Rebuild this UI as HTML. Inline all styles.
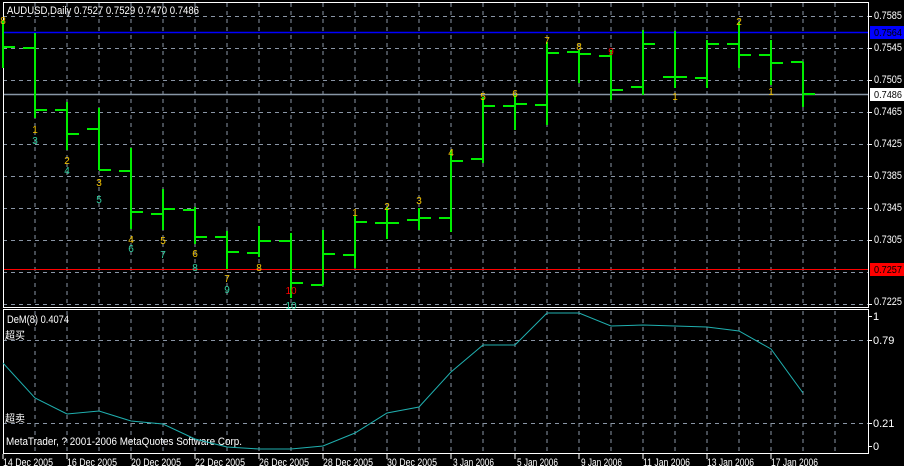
<!DOCTYPE html>
<html><head><meta charset="utf-8"><style>
html,body{margin:0;padding:0;background:#000;width:904px;height:466px;overflow:hidden}
svg{display:block}
text{font-family:"Liberation Sans","Noto Sans CJK SC",sans-serif;font-size:11px}
</style></head><body>
<svg width="904" height="466" viewBox="0 0 904 466" xmlns="http://www.w3.org/2000/svg">
<rect width="904" height="466" fill="#000"/>
<g stroke="#8a96a6" stroke-width="1" stroke-dasharray="4,4">
<path d="M35 3V307M67 3V307M99 3V307M131 3V307M163 3V307M195 3V307M227 3V307M259 3V307M291 3V307M323 3V307M355 3V307M387 3V307M419 3V307M451 3V307M483 3V307M515 3V307M547 3V307M579 3V307M611 3V307M643 3V307M675 3V307M707 3V307M739 3V307M771 3V307M803 3V307M835 3V307"/>
<path d="M35 311V453M67 311V453M99 311V453M131 311V453M163 311V453M195 311V453M227 311V453M259 311V453M291 311V453M323 311V453M355 311V453M387 311V453M419 311V453M451 311V453M483 311V453M515 311V453M547 311V453M579 311V453M611 311V453M643 311V453M675 311V453M707 311V453M739 311V453M771 311V453M803 311V453M835 311V453"/>
<path d="M3 16.5H868M3 48.5H868M3 80.5H868M3 112.5H868M3 144.5H868M3 176.5H868M3 208.5H868M3 240.5H868M3 272.5H868M3 304.5H868"/>
<path d="M3 340.5H868M3 423.5H868"/>
</g>
<path d="M3 32.5H868" stroke="#0000ff" stroke-width="1.5"/>
<path d="M3 94.5H868" stroke="#8896a6" stroke-width="1.5"/>
<path d="M3 269.5H868" stroke="#ff0000" stroke-width="1"/>
<path d="M3.5 2.5H868.5V307.5H3.5Z" fill="none" stroke="#fff" stroke-width="1"/>
<path d="M3.5 309.5H868.5V453.5H3.5Z" fill="none" stroke="#fff" stroke-width="1"/>
<g stroke="#00ee00" stroke-width="2" fill="none">
<path d="M3 20V68M3 47H15"/>
<path d="M35 33V118M23 48H35M35 110H47"/>
<path d="M67 102V150M55 110H67M67 134H79"/>
<path d="M99 108V170M87 129H99M99 170H111"/>
<path d="M131 148V229M119 171H131M131 212H143"/>
<path d="M163 189V230M151 214H163M163 209H175"/>
<path d="M195 207V244M183 210H195M195 237H207"/>
<path d="M227 231V269M215 237H227M227 252H239"/>
<path d="M259 226V257M247 253H259M259 241H271"/>
<path d="M291 233V298M279 241H291M291 283H303"/>
<path d="M323 230V285M311 285H323M323 254H335"/>
<path d="M355 216V268M343 255H355M355 222H367"/>
<path d="M387 207V239M375 223H399"/>
<path d="M419 208V230M407 220H419M419 218H431"/>
<path d="M451 150V232M439 218H451M451 161H463"/>
<path d="M483 97V163M471 159H483M483 106H495"/>
<path d="M515 95V130M503 106H515M515 104H527"/>
<path d="M547 42V125M535 105H547M547 53H559"/>
<path d="M579 50V83M567 52H579M579 54H591"/>
<path d="M611 50V100M599 56H611M611 90H623"/>
<path d="M643 30V95M631 87H643M643 44H655"/>
<path d="M675 31V88M663 77H675M675 77H687"/>
<path d="M707 40V88M695 78H707M707 44H719"/>
<path d="M739 22V68M727 44H739M739 55H751"/>
<path d="M771 40V85M759 55H771M771 63H783"/>
<path d="M803 62V107M791 62H803M803 94H815"/>
</g>
<g fill="#f5c400" text-anchor="middle">
<text x="3" y="24" style="font-size:10px">8</text>
<text x="35" y="133" style="font-size:10px">1</text>
<text x="67" y="164" style="font-size:10px">2</text>
<text x="99" y="186" style="font-size:10px">3</text>
<text x="131" y="243" style="font-size:10px">4</text>
<text x="163" y="244" style="font-size:10px">5</text>
<text x="195" y="257" style="font-size:10px">6</text>
<text x="227" y="282" style="font-size:10px">7</text>
<text x="259" y="271" style="font-size:10px">8</text>
<text x="355" y="216" style="font-size:10px">1</text>
<text x="387" y="210" style="font-size:10px">2</text>
<text x="419" y="204" style="font-size:10px">3</text>
<text x="451" y="156" style="font-size:10px">4</text>
<text x="483" y="100" style="font-size:10px">5</text>
<text x="515" y="97" style="font-size:10px">6</text>
<text x="547" y="44" style="font-size:10px">7</text>
<text x="579" y="50" style="font-size:10px">8</text>
<text x="675" y="100" style="font-size:10px">1</text>
<text x="739" y="25" style="font-size:10px">2</text>
<text x="771" y="95" style="font-size:10px">1</text>
</g>
<g fill="#30d0a0" text-anchor="middle">
<text x="35" y="144" style="font-size:10px">3</text>
<text x="67" y="174" style="font-size:10px">4</text>
<text x="99" y="203" style="font-size:10px">5</text>
<text x="131" y="252" style="font-size:10px">6</text>
<text x="163" y="258" style="font-size:10px">7</text>
<text x="195" y="271" style="font-size:10px">8</text>
<text x="227" y="293" style="font-size:10px">9</text>
<text x="291" y="309" style="font-size:10px">10</text>
</g>
<g fill="#ff0000" text-anchor="middle">
<text x="291" y="294" style="font-size:10px">10</text>
<text x="611" y="55" style="font-size:10px">9</text>
</g>
<text x="7" y="14" fill="#fff" textLength="192" lengthAdjust="spacingAndGlyphs">AUDUSD,Daily  0.7527 0.7529 0.7470 0.7486</text>
<g fill="#fff" style="font-size:10.5px">
<path d="M868 16.5h4M868 48.5h4M868 80.5h4M868 112.5h4M868 144.5h4M868 176.5h4M868 208.5h4M868 240.5h4M868 304.5h4" stroke="#fff"/>
<text x="874" y="19" textLength="28" lengthAdjust="spacingAndGlyphs">0.7585</text>
<text x="874" y="51" textLength="28" lengthAdjust="spacingAndGlyphs">0.7545</text>
<text x="874" y="83" textLength="28" lengthAdjust="spacingAndGlyphs">0.7505</text>
<text x="874" y="115" textLength="28" lengthAdjust="spacingAndGlyphs">0.7465</text>
<text x="874" y="147" textLength="28" lengthAdjust="spacingAndGlyphs">0.7425</text>
<text x="874" y="179" textLength="28" lengthAdjust="spacingAndGlyphs">0.7385</text>
<text x="874" y="211" textLength="28" lengthAdjust="spacingAndGlyphs">0.7345</text>
<text x="874" y="243" textLength="28" lengthAdjust="spacingAndGlyphs">0.7305</text>
<text x="874" y="305" textLength="28" lengthAdjust="spacingAndGlyphs">0.7225</text>
</g>
<rect x="870" y="26" width="34" height="13" fill="#0000ff"/>
<text x="874" y="36" fill="#000" style="font-size:10.5px" textLength="28" lengthAdjust="spacingAndGlyphs">0.7564</text>
<rect x="870" y="88" width="34" height="13" fill="#fff"/>
<text x="874" y="98" fill="#000" style="font-size:10.5px" textLength="28" lengthAdjust="spacingAndGlyphs">0.7486</text>
<rect x="870" y="263" width="34" height="13" fill="#ff0000"/>
<text x="874" y="273" fill="#000" style="font-size:10.5px" textLength="28" lengthAdjust="spacingAndGlyphs">0.7257</text>
<text x="7" y="323" fill="#fff" textLength="62" lengthAdjust="spacingAndGlyphs">DeM(8) 0.4074</text>
<text x="5" y="339" fill="#fff" style="font-size:10px">超买</text>
<text x="5" y="422" fill="#fff" style="font-size:10px">超卖</text>
<text x="6" y="445" fill="#fff" textLength="236" lengthAdjust="spacingAndGlyphs">MetaTrader, ? 2001-2006 MetaQuotes Software Corp.</text>
<polyline fill="none" stroke="#20b0b0" stroke-width="1" points="3,363 35,398 67,414 99,411 131,421 163,424 195,439 227,447 259,449 291,449 323,446 355,433 387,413 419,407 451,372 483,345 515,345 547,313 579,313 611,326 643,325 675,326 707,327 739,331 771,349 803,393"/>
<g fill="#fff" style="font-size:10.5px">
<path d="M868 316.5h4M868 340.5h4M868 423.5h4M868 446.5h4" stroke="#fff"/>
<text x="873" y="320">1</text>
<text x="873" y="344">0.79</text>
<text x="873" y="427">0.21</text>
<text x="873" y="450">0</text>
</g>
<path d="M3 454v5M67 454v5M131 454v5M195 454v5M259 454v5M323 454v5M387 454v5M451 454v5M515 454v5M579 454v5M643 454v5M707 454v5M771 454v5" stroke="#fff"/>
<g fill="#fff">
<text x="3" y="466" textLength="50" lengthAdjust="spacingAndGlyphs">14 Dec 2005</text>
<text x="67" y="466" textLength="50" lengthAdjust="spacingAndGlyphs">16 Dec 2005</text>
<text x="131" y="466" textLength="50" lengthAdjust="spacingAndGlyphs">20 Dec 2005</text>
<text x="195" y="466" textLength="50" lengthAdjust="spacingAndGlyphs">22 Dec 2005</text>
<text x="259" y="466" textLength="50" lengthAdjust="spacingAndGlyphs">26 Dec 2005</text>
<text x="323" y="466" textLength="50" lengthAdjust="spacingAndGlyphs">28 Dec 2005</text>
<text x="387" y="466" textLength="50" lengthAdjust="spacingAndGlyphs">30 Dec 2005</text>
<text x="453" y="466" textLength="41" lengthAdjust="spacingAndGlyphs">3 Jan 2006</text>
<text x="517" y="466" textLength="41" lengthAdjust="spacingAndGlyphs">5 Jan 2006</text>
<text x="581" y="466" textLength="41" lengthAdjust="spacingAndGlyphs">9 Jan 2006</text>
<text x="643" y="466" textLength="47" lengthAdjust="spacingAndGlyphs">11 Jan 2006</text>
<text x="707" y="466" textLength="47" lengthAdjust="spacingAndGlyphs">13 Jan 2006</text>
<text x="771" y="466" textLength="47" lengthAdjust="spacingAndGlyphs">17 Jan 2006</text>
</g>
</svg>
</body></html>
